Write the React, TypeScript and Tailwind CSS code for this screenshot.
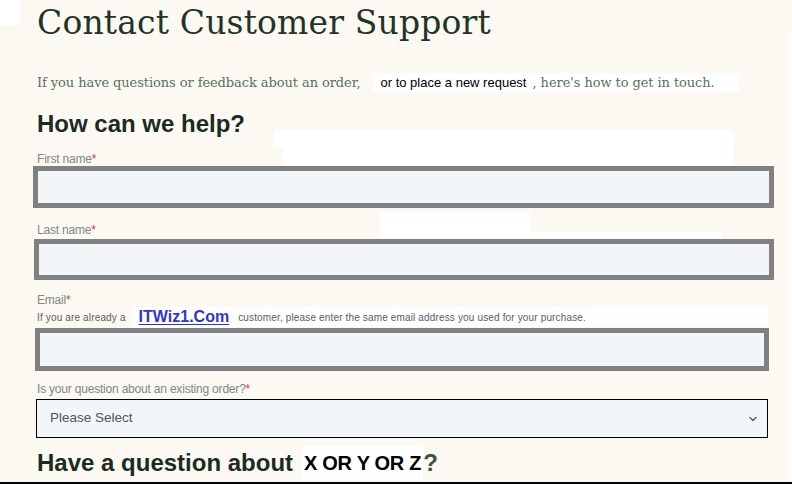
import { ChevronDown } from "lucide-react";

const serif = { fontFamily: '"DejaVu Serif", serif' };

function Label({ text }: { text: string }) {
  return (
    <div className="h-[12px] text-[12px] leading-[12px] text-[#7b8a80] tracking-[-0.2px]">
      {text}
      <span className="text-[#e0333a]">*</span>
    </div>
  );
}

export default function App() {
  return (
    <div className="relative w-[792px] h-[484px] overflow-hidden bg-[#fcf9f2] font-['Liberation_Sans',sans-serif]">
      {/* pasted-over white patches */}
      <div className="absolute left-0 top-0 w-[20px] h-[25px] bg-white" />
      <div className="absolute left-[274px] top-[130px] w-[459px] h-[17px] bg-white" />
      <div className="absolute left-[283px] top-[146px] w-[450px] h-[31px] bg-white" />
      <div className="absolute left-[380px] top-[212px] w-[150px] h-[27px] bg-white" />
      <div className="absolute left-[526px] top-[232px] w-[196px] h-[20px] bg-white" />
      <div className="absolute right-0 top-[30px] w-[3px] h-[450px] bg-[#fefdfb]" />

      <div className="relative flex flex-col pl-[37px]">
        <div className="h-[48px] pt-[3px]">
          <h1
            className="text-[33px] leading-[40px] text-[#1f3527] tracking-[0.15px]"
            style={serif}
          >
            Contact Customer Support
          </h1>
        </div>

        <div className="mt-[25px] flex items-center h-[19px]">
          <span className="text-[13px] text-[#58705f] tracking-[-0.08px]" style={serif}>
            If you have questions or feedback about an order,
          </span>
          <span className="ml-[12px] bg-white h-[19px] flex items-center pl-[8px] pr-[6px] text-[13px] text-black">
            or to place a new request
          </span>
          <span
            className="bg-white h-[19px] flex items-center pr-[24px] text-[13px] text-[#58705f] tracking-[-0.08px]"
            style={serif}
          >
            , here's how to get in touch.
          </span>
        </div>

        <h2 className="mt-[18px] h-[28px] text-[24px] leading-[28px] font-bold text-[#1c2b21]">
          How can we help?
        </h2>

        <div className="mt-[15px]">
          <Label text="First name" />
        </div>
        <div className="-ml-[4px] mt-[1px] w-[741px] h-[42px] border-[5px] border-[#808080] bg-[#f2f6f9]" />

        <div className="mt-[16px]">
          <Label text="Last name" />
        </div>
        <div className="-ml-[3px] mt-[3px] w-[740px] h-[41px] border-[5px] border-[#808080] bg-[#f2f6f9]" />

        <div className="mt-[14px]">
          <Label text="Email" />
        </div>
        <div className="flex items-center mt-[1px] h-[20px]">
          <span className="text-[10px] text-[#56615a] tracking-[0.15px]">If you are already a</span>
          <span className="ml-[6px] bg-white h-[21px] flex items-center px-[7px]">
            <a className="text-[16px] leading-none font-bold text-[#2e34d4] underline underline-offset-[2px]">
              ITWiz1.Com
            </a>
          </span>
          <span className="bg-white h-[20px] flex items-center pl-[2px] pr-[182px] text-[10px] text-[#56615a] tracking-[0.15px]">
            customer, please enter the same email address you used for your purchase.
          </span>
        </div>
        <div className="-ml-[2px] mt-[1px] w-[734px] h-[43px] border-[5px] border-[#808080] bg-[#f2f6f9]" />

        <div className="mt-[12px]">
          <Label text="Is your question about an existing order?" />
        </div>
        <div className="-ml-[1px] mt-[4px] w-[732px] h-[39px] border border-black bg-[#f2f6f9] flex items-center justify-between pl-[13px] pr-[8px]">
          <span className="text-[13.5px] text-[#4d5566]">Please Select</span>
          <ChevronDown className="w-[12px] h-[12px] text-[#5a6270]" strokeWidth={3} />
        </div>

        <div className="mt-[12px] flex items-center h-[25px]">
          <span className="text-[24px] font-bold text-[#1c2b21] leading-none">
            Have a question about
          </span>
          <span className="ml-[9px] bg-white h-[34px] flex items-center px-[2px] text-[20px] font-bold text-black tracking-[-0.3px]">
            X OR Y OR Z
          </span>
          <span className="text-[24px] font-bold text-[#3f5447] leading-none">?</span>
        </div>
      </div>

      <div className="absolute left-0 bottom-0 w-full h-[2px] bg-black" />
    </div>
  );
}
